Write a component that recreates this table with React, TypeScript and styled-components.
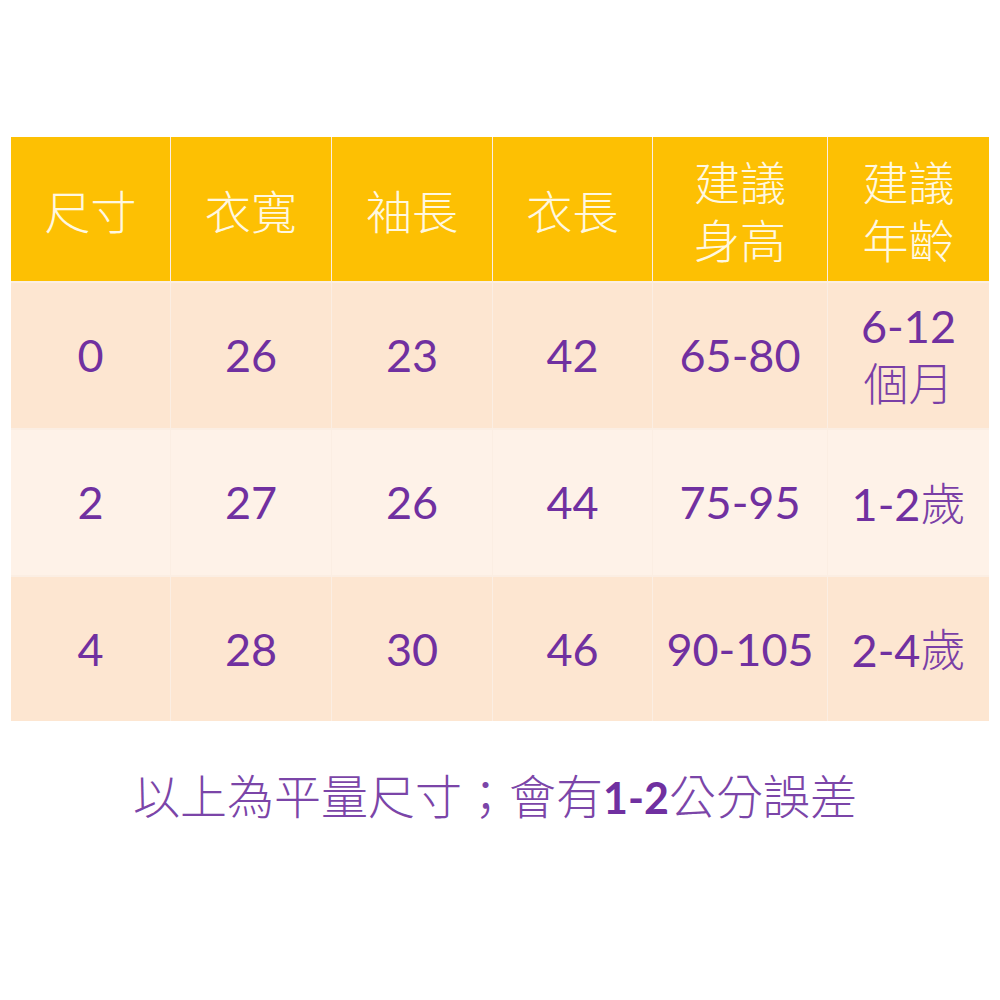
import React from 'react';
import styled, { createGlobalStyle } from 'styled-components';

const GlobalStyle = createGlobalStyle`
  html, body {
    margin: 0;
    padding: 0;
    background: #ffffff;
  }
  body {
    font-family: Lato, "Noto Sans CJK TC", sans-serif;
  }
`;

const Page = styled.div`
  width: 1000px;
  height: 1000px;
  padding-top: 137px;
  box-sizing: border-box;
  display: flex;
  flex-direction: column;
  align-items: center;
`;

const Table = styled.div`
  width: 978px;
  display: grid;
  grid-template-columns: 159px 160px 160px 159px 174px 1fr;
  grid-template-rows: 144px 145px 145px 144px;
  column-gap: 1px;
  row-gap: 2px;
  background: #fbeee3;
`;

const HeadCell = styled.div`
  background: #fdc003;
  color: #fff8e1;
  font-family: "Noto Sans CJK TC", sans-serif;
  font-weight: 300;
  font-size: 46px;
  line-height: 58px;
  display: flex;
  align-items: center;
  justify-content: center;
  text-align: center;
`;

const Cell = styled.div<{ $alt?: boolean }>`
  background: ${p => (p.$alt ? '#fef2e8' : '#fde6d1')};
  color: #7030a0;
  font-family: Lato, "Noto Sans CJK TC", sans-serif;
  font-size: 45px;
  line-height: 55px;
  display: flex;
  align-items: center;
  justify-content: center;
  text-align: center;
  white-space: nowrap;
`;

const Cjk = styled.span`
  font-family: "Noto Sans CJK TC", sans-serif;
  font-weight: 300;
  font-size: 45px;
  color: #7a3fa6;
`;

const Note = styled.div`
  margin-top: 44px;
  margin-left: -10px;
  color: #7b45a8;
  font-family: "Noto Sans CJK TC", sans-serif;
  font-weight: 300;
  font-size: 47px;
  line-height: 58px;
  white-space: nowrap;
`;

const NoteNum = styled.span`
  font-family: Lato, sans-serif;
  font-weight: 700;
  font-size: 43px;
  color: #7030a0;
`;

const headers: React.ReactNode[] = [
  '尺寸',
  '衣寬',
  '袖長',
  '衣長',
  <>建議<br />身高</>,
  <>建議<br />年齡</>,
];

const rows: React.ReactNode[][] = [
  ['0', '26', '23', '42', '65-80', <>6-12<br /><Cjk>個月</Cjk></>],
  ['2', '27', '26', '44', '75-95', <>1-2<Cjk>歲</Cjk></>],
  ['4', '28', '30', '46', '90-105', <>2-4<Cjk>歲</Cjk></>],
];

const App: React.FC = () => (
  <>
    <GlobalStyle />
    <Page>
      <Table>
        {headers.map((h, i) => (
          <HeadCell key={`h${i}`}>
            <div>{h}</div>
          </HeadCell>
        ))}
        {rows.map((row, r) =>
          row.map((c, i) => (
            <Cell key={`${r}-${i}`} $alt={r === 1}>
              <div>{c}</div>
            </Cell>
          ))
        )}
      </Table>
      <Note>
        以上為平量尺寸；會有<NoteNum>1-2</NoteNum>公分誤差
      </Note>
    </Page>
  </>
);

export default App;
